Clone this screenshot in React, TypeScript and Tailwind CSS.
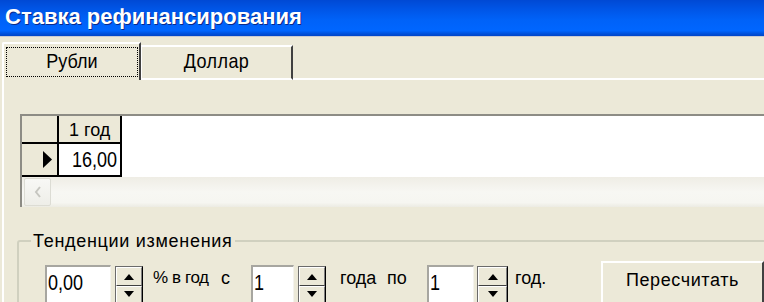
import React from "react";

const font = { fontFamily: '"Liberation Sans", Arial, sans-serif' };

function Spin({ w = 28 }: { w?: number }) {
  return (
    <div
      className="flex-none h-[40px] border border-black border-t-[#6b6b6b] border-l-[#6b6b6b] flex flex-col bg-[#ECE9D8]"
      style={{ width: w }}
    >
      <div className="h-[19px] border-t border-l border-white border-r border-b border-r-[#808080] border-b-[#404040] flex items-center justify-center">
        <svg width="10" height="6" viewBox="0 0 10 6">
          <polygon points="0,6 5,0 10,6" fill="#000" />
        </svg>
      </div>
      <div className="flex-1 border-t border-l border-white border-r border-r-[#808080] flex items-start pt-[4px] justify-center">
        <svg width="10" height="6" viewBox="0 0 10 6">
          <polygon points="0,0 10,0 5,6" fill="#000" />
        </svg>
      </div>
    </div>
  );
}

function Edit({ w, value }: { w: number; value: string }) {
  return (
    <div
      className="flex-none mt-[4px] h-[40px] bg-white border-t-2 border-l-2 border-[#a7a6a0] border-r border-b border-r-[#f4f3ee] border-b-[#f4f3ee] pl-[1px] pt-[2px] text-[18px] leading-[22px] text-black"
      style={{ width: w }}
    >
      <span className="inline-block origin-top scale-y-[1.25]">{value}</span>
    </div>
  );
}

export default function App() {
  return (
    <div className="w-[764px] h-[302px] overflow-hidden bg-[#ECE9D8] flex flex-col text-black" style={font}>
      {/* Title bar */}
      <div className="h-[37px] flex-none flex items-center pl-[5px] pb-[3px] bg-[linear-gradient(to_bottom,#0049d4_0%,#0055e6_25%,#0062f8_55%,#0066ff_85%,#0050da_94%,#0046c8_100%)] border-b border-[#c9cbd3]">
        <span className="text-white font-bold text-[22px] leading-none [text-shadow:1px_1px_0_#0a2a8a]">
          Ставка рефинансирования
        </span>
      </div>

      {/* Tabs */}
      <div className="h-[43px] flex-none flex items-end pl-[2px]">
        <div className="w-[139px] h-[38px] flex-none border-t-2 border-l-2 border-white border-r-2 border-r-[#404040] rounded-tl-[2px] pt-[3px] pl-[2px] pr-[1px] pb-[3px]">
          <div className="h-full border border-dotted border-black flex items-center justify-center text-[18px] leading-none">
            <span className="inline-block scale-y-[1.08]">Рубли</span>
          </div>
        </div>
        <div className="w-[152px] h-[35px] flex-none border-t-2 border-l border-white border-r-2 border-r-[#404040] border-b-2 border-b-white flex items-center justify-center text-[18px] leading-none pb-[1px] tracking-[0.4px]">
          <span className="inline-block scale-y-[1.08]">Доллар</span>
        </div>
        <div className="flex-1 h-full border-b-2 border-white" />
      </div>

      {/* Panel */}
      <div className="flex-1 ml-[2px] border-l-2 border-white flex flex-col">
        {/* Grid */}
        <div className="mt-[34px] ml-[16px] w-[770px] flex-none border-t-2 border-l-2 border-[#8d8c85] flex flex-col bg-white">
          <div className="flex h-[28px]">
            <div className="w-[37px] flex-none bg-[#ECE9D8] border-r-2 border-b-2 border-black" />
            <div className="w-[63px] flex-none bg-[#ECE9D8] border-r-2 border-b-2 border-black text-[18px] leading-[22px] pt-[3px] pl-[10px]">
              1 год
            </div>
            <div className="flex-1" />
          </div>
          <div className="flex h-[33px]">
            <div className="w-[37px] flex-none bg-[#ECE9D8] border-r-2 border-b-2 border-black flex items-center justify-end pr-[5px]">
              <svg width="9" height="17" viewBox="0 0 9 17">
                <polygon points="0,0 9,8.5 0,17" fill="#000" />
              </svg>
            </div>
            <div className="w-[63px] flex-none bg-white border-r-2 border-b-2 border-black text-[18px] leading-[22px] pt-[2px] text-right pr-[3px]">
              <span className="inline-block origin-top scale-y-[1.25]">16,00</span>
            </div>
            <div className="flex-1" />
          </div>
          {/* scrollbar */}
          <div className="h-[30px] flex bg-[linear-gradient(to_bottom,#efede5_0%,#f3f2ec_25%,#f7f7f3_50%,#f6f6f1_85%,#ecebe3_100%)]">
            <div className="ml-[2px] mt-[1px] w-[27px] h-[28px] rounded-[2px] border border-[#dcdcd4] bg-[linear-gradient(to_bottom,#f8f8f5,#eeeee8)] flex items-center justify-center">
              <svg width="8" height="12" viewBox="0 0 8 12">
                <polyline points="6,1 2,6 6,11" fill="none" stroke="#c6c6c0" strokeWidth="2" />
              </svg>
            </div>
            <div className="flex-1" />
            <div className="mt-[1px] mr-[-8px] w-[27px] h-[28px] rounded-[2px] border border-[#dcdcd4] bg-[linear-gradient(to_bottom,#f8f8f5,#eeeee8)]" />
          </div>
        </div>

        {/* Group box */}
        <fieldset className="mt-[23px] ml-[13px] w-[800px] border-2 border-[#d0d0bf] rounded-[3px] pt-[9px]">
          <legend className="ml-[12px] px-[2px] text-[18px] leading-[22px] tracking-[0.7px]">
            Тенденции изменения
          </legend>
          <div className="flex items-start text-[18px] leading-[22px]">
            <div className="ml-[26px]" />
            <Edit w={66} value="0,00" />
            <div className="ml-[4px] mt-[5px]">
              <Spin />
            </div>
            <span className="ml-[10px] mt-[6px] w-[56px] flex-none whitespace-nowrap text-[17px] tracking-[-0.4px]">% в год</span>
            <span className="ml-[12px] mt-[6px] w-[10px] flex-none">с</span>
            <div className="ml-[20px]" />
            <Edit w={43} value="1" />
            <div className="ml-[4px] mt-[5px]">
              <Spin />
            </div>
            <span className="ml-[14px] mt-[6px] w-[44px] flex-none whitespace-nowrap">года</span>
            <span className="ml-[3px] mt-[6px] w-[22px] flex-none">по</span>
            <div className="ml-[18px]" />
            <Edit w={47} value="1" />
            <div className="ml-[3px] mt-[5px]">
              <Spin w={31} />
            </div>
            <span className="ml-[7px] mt-[6px] w-[34px] flex-none whitespace-nowrap">год.</span>
            <div className="ml-[52px] w-[163px] h-[44px] flex-none border-t-2 border-l-2 border-white border-r-2 border-b-2 border-r-[#404040] border-b-[#404040] flex justify-center pt-[6px] tracking-[0.6px]">
              Пересчитать
            </div>
          </div>
        </fieldset>
      </div>
    </div>
  );
}
